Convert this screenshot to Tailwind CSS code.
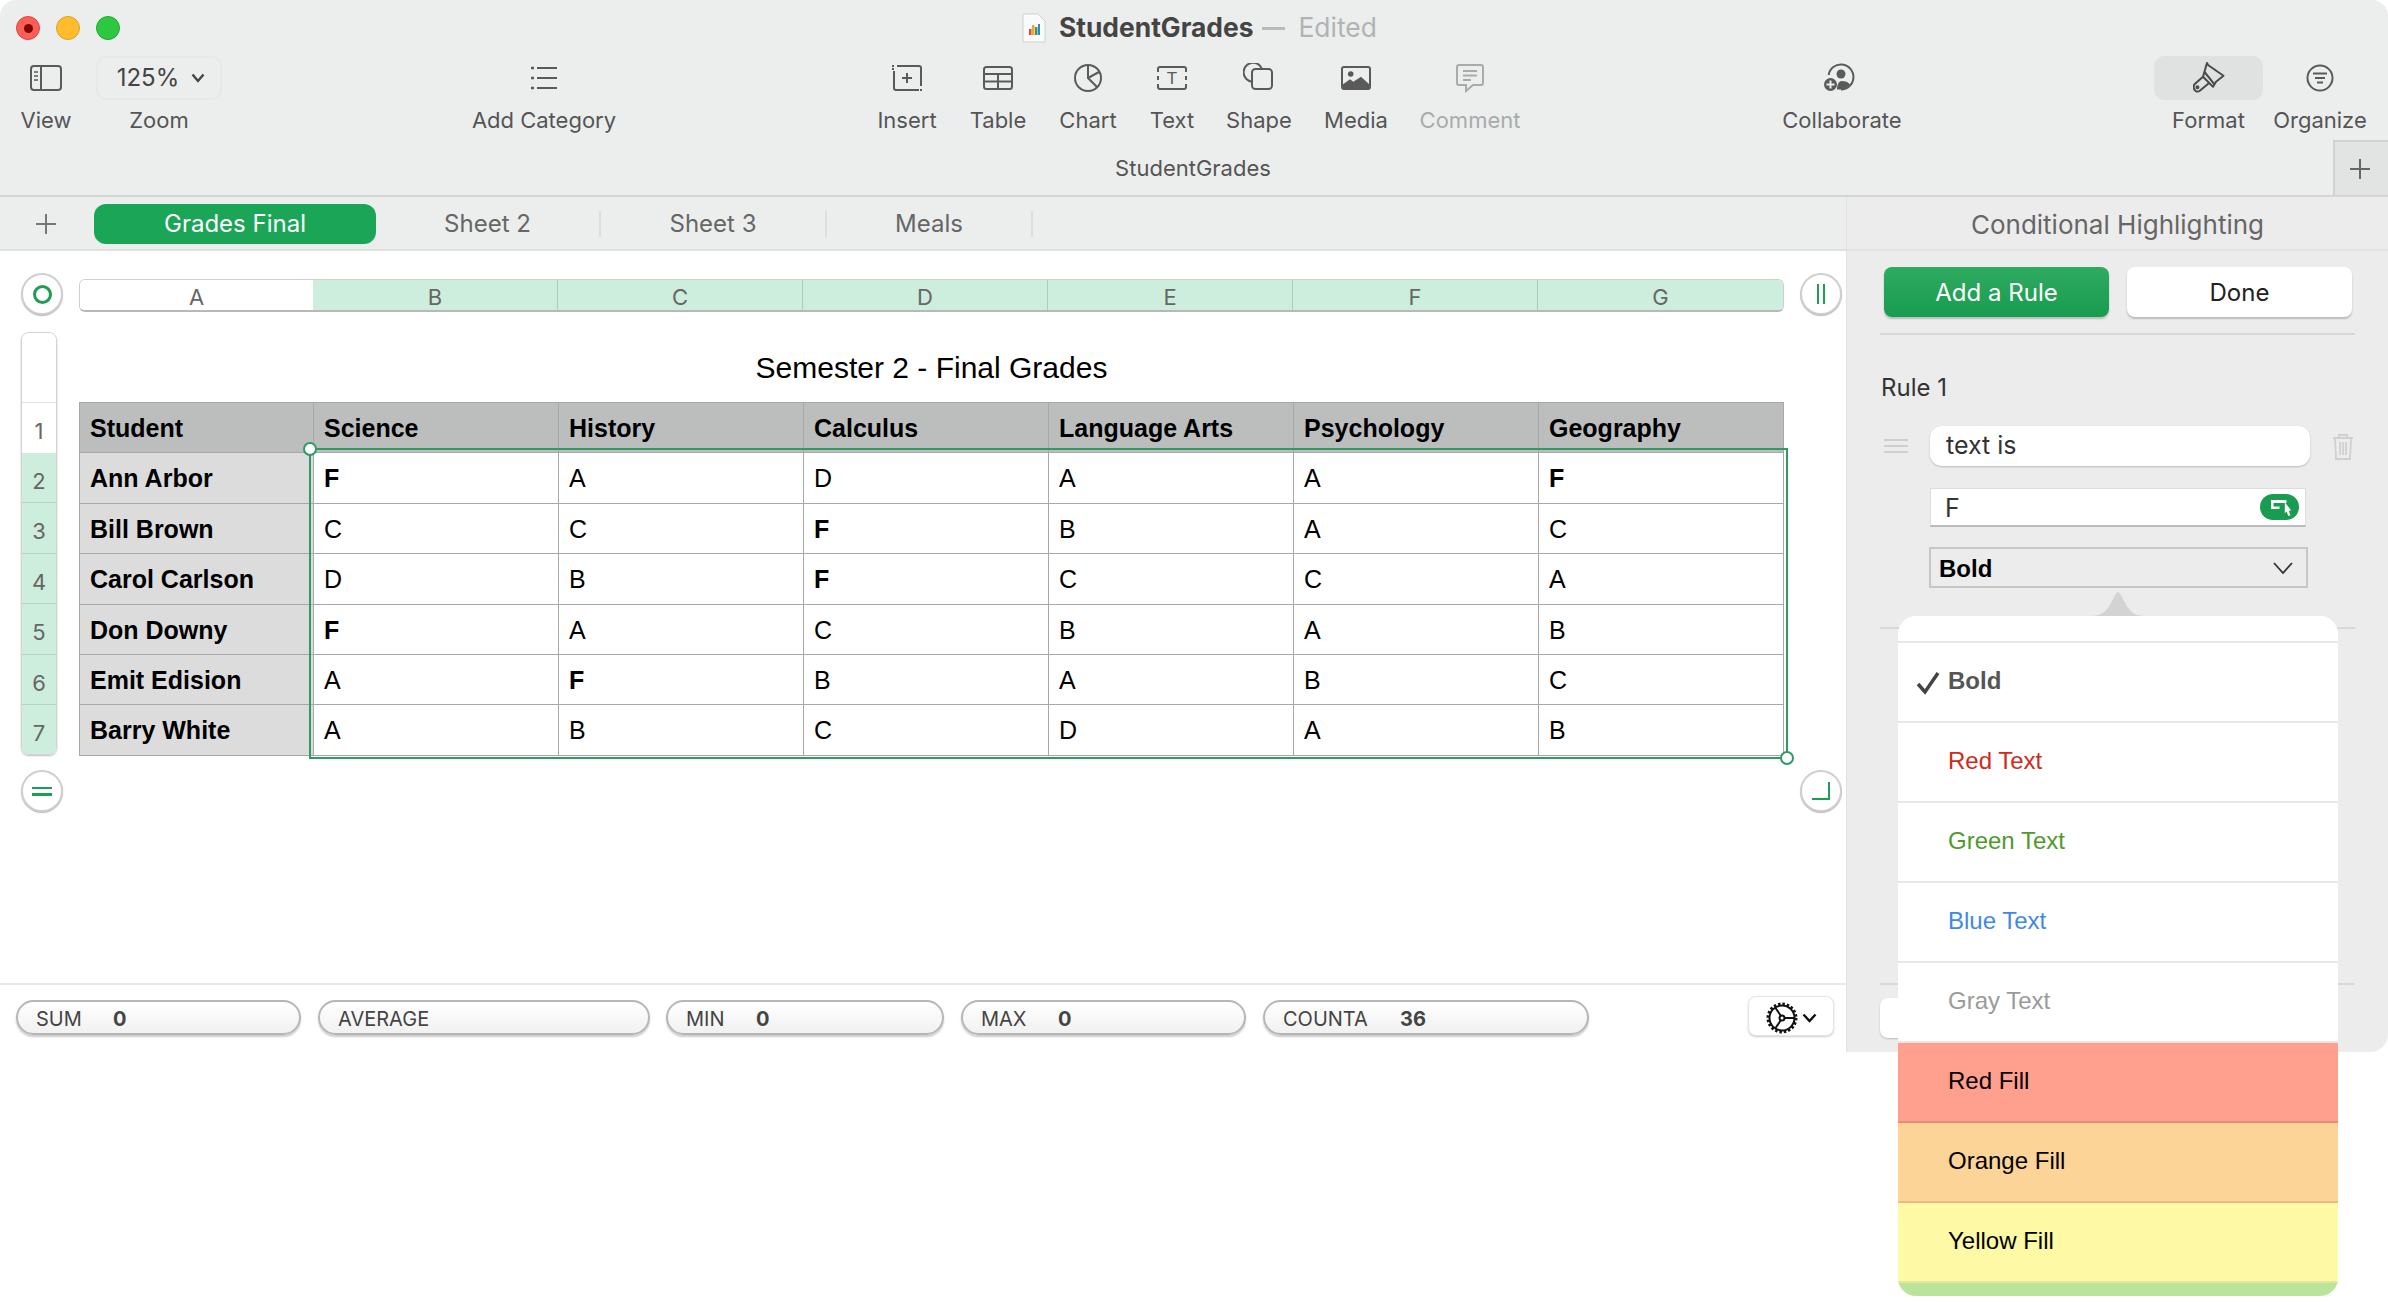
<!DOCTYPE html>
<html lang="en">
<head>
    <meta charset="UTF-8">
    <title>StudentGrades - Numbers</title>
    <script src="https://cdn.jsdelivr.net/npm/@tailwindcss/browser@4"></script>
</head>
<body class="bg-white">
<div class="w-[2388px] h-[1302px] overflow-hidden relative [font-family:Inter,sans-serif] text-[#555] antialiased">

    <!-- title bar and toolbar -->
    <header class="h-[197px] bg-[#eceeee] rounded-t-[16px] border-b-2 border-[#d4d6d6]">
        <div class="h-[56px] flex items-center">
            <span class="ml-[16px] w-[24px] h-[24px] rounded-full bg-[#fd5f57] border border-[#e0443e] flex items-center justify-center"><span class="w-[9px] h-[9px] rounded-full bg-[#7e0508]"></span></span>
            <span class="ml-[16px] w-[24px] h-[24px] rounded-full bg-[#febc2e] border border-[#dea123]"></span>
            <span class="ml-[16px] w-[24px] h-[24px] rounded-full bg-[#2dc840] border border-[#1aab29]"></span>
            <svg class="ml-[902px]" width="24" height="30" viewBox="0 0 24 30">
                <path d="M1 1h15l7 7v21H1z" fill="#fbfbfb" stroke="#cfcfcf"/>
                <rect x="7" y="16" width="2.5" height="6" fill="#e04b3a"/><rect x="10" y="12" width="2.5" height="10" fill="#f0a330"/><rect x="13" y="14" width="2.5" height="8" fill="#2aa552"/><rect x="16" y="11" width="2" height="11" fill="#3c7fd8"/>
            </svg>
            <span class="ml-[13px] text-[26.4px] font-bold text-[#444]">StudentGrades</span>
            <span class="ml-[9px] w-[23px] h-[3px] bg-[#b8bbbb]"></span>
            <span class="ml-[13px] text-[26.4px] text-[#b0b3b3]">Edited</span>
        </div>

        <div class="h-[84px] flex text-[22px] leading-[28px] text-center">
            <div class="w-[92px] flex flex-col items-center">
                <div class="h-[44px] flex items-center justify-center">
                    <svg width="34" height="28" viewBox="0 0 34 28" fill="none" stroke="#5a5a5a" stroke-width="2"><rect x="2" y="2" width="30" height="24" rx="3"/><path d="M12 2v24"/><path d="M5 8h4M5 12h4M5 16h4" stroke-width="1.5"/></svg>
                </div>
                <span class="mt-[6px]">View</span>
            </div>
            <div class="ml-[4px] w-[126px] flex flex-col items-center">
                <div class="h-[44px] w-[126px] pl-[4px] rounded-[10px] border-2 border-[#e6e8e8] flex items-center justify-center gap-[12px] text-[#444]">
                    <span class="text-[24px]">125%</span>
                    <svg width="14" height="10" viewBox="0 0 14 10" fill="none" stroke="#444" stroke-width="2.4"><path d="M1.5 1.5 7 8l5.500-6.500"/></svg>
                </div>
                <span class="mt-[6px]">Zoom</span>
            </div>
            <div class="ml-[242px] w-[160px] flex flex-col items-center">
                <div class="h-[44px] flex items-center justify-center">
                    <svg width="28" height="30" viewBox="0 0 28 30" fill="none" stroke="#5a5a5a" stroke-width="2.200"><path d="M7 5h20M7 15h20M7 25h20"/><path d="M1 5h3M1 15h3M1 25h3" stroke-width="2.600"/></svg>
                </div>
                <span class="mt-[6px]">Add Category</span>
            </div>
            <div class="ml-[243px] w-[80px] flex flex-col items-center">
                <div class="h-[44px] flex items-center justify-center">
                    <svg width="32" height="28" viewBox="0 0 32 28" fill="none" stroke="#5a5a5a" stroke-width="2"><path d="M6 2h22a2 2 0 0 1 2 2v18M28 26H5a2 2 0 0 1-2-2V7"/><path d="M1 2h2M1 5h2M30 25v2" /><path d="M16 9v10M11 14h10"/></svg>
                </div>
                <span class="mt-[6px]">Insert</span>
            </div>
            <div class="ml-[11px] w-[80px] flex flex-col items-center">
                <div class="h-[44px] flex items-center justify-center">
                    <svg width="32" height="26" viewBox="0 0 32 26" fill="none" stroke="#5a5a5a" stroke-width="2"><rect x="2" y="2" width="28" height="22" rx="2.500"/><path d="M2 9h28M2 16.500h28M16 9v15"/></svg>
                </div>
                <span class="mt-[6px]">Table</span>
            </div>
            <div class="ml-[10px] w-[80px] flex flex-col items-center">
                <div class="h-[44px] flex items-center justify-center">
                    <svg width="30" height="30" viewBox="0 0 30 30" fill="none" stroke="#5a5a5a" stroke-width="2"><circle cx="15" cy="15" r="13"/><path d="M15 2v13l9 9M15 15l11-6"/></svg>
                </div>
                <span class="mt-[6px]">Chart</span>
            </div>
            <div class="ml-[4px] w-[80px] flex flex-col items-center">
                <div class="h-[44px] flex items-center justify-center">
                    <svg width="32" height="26" viewBox="0 0 32 26" fill="none" stroke="#5a5a5a" stroke-width="2"><path d="M2 7V4a2 2 0 0 1 2-2h24a2 2 0 0 1 2 2v3M2 19v3a2 2 0 0 0 2 2h24a2 2 0 0 0 2-2v-3M2 11v4M30 11v4"/><text x="16" y="19" text-anchor="middle" font-size="17" fill="#5a5a5a" stroke="none" font-family="Liberation Sans">T</text></svg>
                </div>
                <span class="mt-[6px]">Text</span>
            </div>
            <div class="ml-[7px] w-[80px] flex flex-col items-center">
                <div class="h-[44px] flex items-center justify-center">
                    <svg width="32" height="30" viewBox="0 0 32 30" fill="none" stroke="#5a5a5a" stroke-width="2"><path d="M9 18.700A9.500 9.500 0 1 1 19 6"/><rect x="9" y="6" width="20" height="20" rx="3.500"/></svg>
                </div>
                <span class="mt-[6px]">Shape</span>
            </div>
            <div class="ml-[17px] w-[80px] flex flex-col items-center">
                <div class="h-[44px] flex items-center justify-center">
                    <svg width="32" height="26" viewBox="0 0 32 26"><rect x="2" y="2" width="28" height="22" rx="2" fill="#eceeee" stroke="#5a5a5a" stroke-width="2"/><circle cx="10.700" cy="9" r="2.800" fill="#5a5a5a"/><path d="M2 20l8-5.700 3.300 2.400 7.700-5L30 20v4H2z" fill="#5a5a5a"/></svg>
                </div>
                <span class="mt-[6px]">Media</span>
            </div>
            <div class="ml-[24px] w-[100px] flex flex-col items-center text-[#a8abab]">
                <div class="h-[44px] flex items-center justify-center">
                    <svg width="30" height="30" viewBox="0 0 30 30" fill="none" stroke="#a8abab" stroke-width="2"><path d="M4 2h22a2 2 0 0 1 2 2v16a2 2 0 0 1-2 2h-8l-7 6v-6H4a2 2 0 0 1-2-2V4a2 2 0 0 1 2-2z"/><path d="M8 8h14M8 12.500h14M8 17h8"/></svg>
                </div>
                <span class="mt-[6px]">Comment</span>
            </div>
            <div class="ml-[252px] w-[140px] flex flex-col items-center">
                <div class="h-[44px] flex items-center justify-center">
                    <svg width="36" height="30" viewBox="0 0 36 30" fill="none" stroke="#5a5a5a" stroke-width="2"><path d="M4.600 12A12.500 12.500 0 1 1 17 26.500"/><circle cx="17" cy="11" r="4.500" fill="#5a5a5a" stroke="none"/><path d="M13 26.500c0-5 2-8.500 4.500-8.500 4 0 7 1 8.500 3.500-2 3-6 5-9.500 5z" fill="#5a5a5a" stroke="none"/><circle cx="6.500" cy="21.500" r="6.500" fill="#5a5a5a" stroke="none"/><path d="M6.500 17.500v8M2.500 21.500h8" stroke="#eceeee"/></svg>
                </div>
                <span class="mt-[6px]">Collaborate</span>
            </div>
            <div class="ml-[242px] w-[109px] flex flex-col items-center">
                <div class="h-[44px] w-[109px] rounded-[10px] bg-[#e0e2e2] flex items-center justify-center">
                    <svg width="32" height="32" viewBox="0 0 32 32" fill="none" stroke="#4a4a4a" stroke-width="2" stroke-linejoin="round"><path d="M14 1l1 2 15.500 10.700L23 19.700l-3 5-10-10z"/><path d="M11.500 10l10 12.300"/><path d="M10 14.700 1.500 22.300c-1.500 2-1 5 1 6.500 1.500 1 3 1 4.300-.1l9-7.400"/><circle cx="4.400" cy="25.300" r="1"/></svg>
                </div>
                <span class="mt-[6px]">Format</span>
            </div>
            <div class="ml-[7px] w-[100px] flex flex-col items-center">
                <div class="h-[44px] flex items-center justify-center">
                    <svg width="28" height="28" viewBox="0 0 28 28" fill="none" stroke="#5a5a5a" stroke-width="2"><circle cx="14" cy="14" r="12.500"/><path d="M7 9.500h14M9 14h10M11 18.500h6"/></svg>
                </div>
                <span class="mt-[6px]">Organize</span>
            </div>
        </div>

        <div class="h-[55px] flex items-center text-[22px]">
            <span class="ml-[1093px] w-[200px] text-center pt-[1px]">StudentGrades</span>
            <span class="ml-auto w-[55px] h-[55px] pr-[3px] bg-[#e2e3e3] border-l-2 border-t-2 border-[#d0d2d2] flex items-center justify-center">
                <svg width="22" height="22" viewBox="0 0 22 22" stroke="#666" stroke-width="2"><path d="M11 1v20M1 11h20"/></svg>
            </span>
        </div>
    </header>

    <div class="flex h-[855px]">
        <!-- sheet area -->
        <div class="w-[1846px] flex flex-col">
            <div class="h-[54px] pt-[2px] bg-[#eceeee] border-b-2 border-[#dfe1e1] flex items-center text-[24px] text-[#666]">
                <svg class="ml-[36px]" width="20" height="20" viewBox="0 0 20 20" stroke="#777" stroke-width="2"><path d="M10 0v20M0 10h20"/></svg>
                <div class="ml-[38px] w-[282px] h-[40px] rounded-[12px] bg-[#1ba557] text-white flex items-center justify-center">Grades Final</div>
                <div class="w-[225px] text-center border-r-2 border-[#dcdede] h-[26px] leading-[26px]">Sheet 2</div>
                <div class="w-[226px] text-center border-r-2 border-[#dcdede] h-[26px] leading-[26px]">Sheet 3</div>
                <div class="w-[206px] text-center border-r-2 border-[#dcdede] h-[26px] leading-[26px]">Meals</div>
            </div>

            <div class="flex-1 bg-white">
                <div class="flex mt-[22px] h-[42px]">
                    <div class="ml-[21px] w-[42px] h-[42px] rounded-full border-2 border-[#cfcfcf] shadow-[0_1px_1px_#bbb] bg-white flex items-center justify-center">
                        <span class="w-[19px] h-[19px] rounded-full border-[3px] border-[#1f9d55]"></span>
                    </div>
                    <div class="ml-[16px] mt-[6px] h-[33px] w-[1705px] flex text-[22px] text-[#666] text-center leading-[34px] border border-[#cfcfcf] border-b-2 border-b-[#b8b8b8] rounded-[6px] overflow-hidden">
                        <div class="w-[233px] bg-white">A</div>
                        <div class="w-[245px] bg-[#cdeddd] border-r border-[#a9cfbb]">B</div>
                        <div class="w-[245px] bg-[#cdeddd] border-r border-[#a9cfbb]">C</div>
                        <div class="w-[245px] bg-[#cdeddd] border-r border-[#a9cfbb]">D</div>
                        <div class="w-[245px] bg-[#cdeddd] border-r border-[#a9cfbb]">E</div>
                        <div class="w-[245px] bg-[#cdeddd] border-r border-[#a9cfbb]">F</div>
                        <div class="flex-1 bg-[#cdeddd]">G</div>
                    </div>
                    <div class="ml-[16px] w-[42px] h-[42px] rounded-full border-2 border-[#cfcfcf] shadow-[0_1px_1px_#bbb] bg-white flex items-center justify-center gap-[4px]">
                        <span class="w-[2px] h-[20px] bg-[#1f9d55]"></span><span class="w-[2px] h-[20px] bg-[#1f9d55]"></span>
                    </div>
                </div>

                <div class="flex mt-[17px] h-[423px]">
                    <div class="ml-[21px] w-[36px] flex flex-col text-[22px] text-center text-[#666] leading-[56px] border border-[#d4d4d4] rounded-[8px] overflow-hidden shadow-[0_1px_2px_#bbb] [&>div]:shrink-0">
                        <div class="h-[70px] bg-white border-b border-[#e0e0e0]"></div>
                        <div class="h-[50px] bg-white">1</div>
                        <div class="h-[50.4px] bg-[#cdeddd] border-b border-[#b3d6c4]">2</div>
                        <div class="h-[50.4px] bg-[#cdeddd] border-b border-[#b3d6c4]">3</div>
                        <div class="h-[50.4px] bg-[#cdeddd] border-b border-[#b3d6c4]">4</div>
                        <div class="h-[50.4px] bg-[#cdeddd] border-b border-[#b3d6c4]">5</div>
                        <div class="h-[50.4px] bg-[#cdeddd] border-b border-[#b3d6c4]">6</div>
                        <div class="h-[50px] bg-[#cdeddd]">7</div>
                    </div>

                    <div class="ml-[22px] w-[1705px] [font-family:'Liberation_Sans',sans-serif] text-black">
                        <div class="h-[70px] flex items-center justify-center text-[30px]">Semester 2 - Final Grades</div>
                        <div class="relative">
                            <table class="w-[1705px] table-fixed border-collapse text-[25px] [&_td]:border [&_td]:border-[#a8a8a8] [&_td]:px-[10px] [&_td]:pt-[2px] [&_td]:pb-0 [&_td:first-child]:font-bold [&_td:first-child]:bg-[#dcdcdc] [&_td:first-child]:w-[234px] [&_tr]:h-[50.4px]">
                                <tr class="bg-[#bcbebd] font-bold">
                                    <td class="bg-[#bcbebd]!">Student</td><td>Science</td><td>History</td><td>Calculus</td><td>Language Arts</td><td>Psychology</td><td>Geography</td>
                                </tr>
                                <tr><td>Ann Arbor</td><td class="font-bold">F</td><td>A</td><td>D</td><td>A</td><td>A</td><td class="font-bold">F</td></tr>
                                <tr><td>Bill Brown</td><td>C</td><td>C</td><td class="font-bold">F</td><td>B</td><td>A</td><td>C</td></tr>
                                <tr><td>Carol Carlson</td><td>D</td><td>B</td><td class="font-bold">F</td><td>C</td><td>C</td><td>A</td></tr>
                                <tr><td>Don Downy</td><td class="font-bold">F</td><td>A</td><td>C</td><td>B</td><td>A</td><td>B</td></tr>
                                <tr><td>Emit Edision</td><td>A</td><td class="font-bold">F</td><td>B</td><td>A</td><td>B</td><td>C</td></tr>
                                <tr><td>Barry White</td><td>A</td><td>B</td><td>C</td><td>D</td><td>A</td><td>B</td></tr>
                            </table>
                            <!-- selection frame over the table -->
                            <div class="absolute left-[230px] top-[46px] w-[1479px] h-[311px] border-2 border-[#2e9b63]">
                                <span class="absolute -left-[8px] -top-[8px] w-[14px] h-[14px] rounded-full bg-white border-2 border-[#2e9b63]"></span>
                                <span class="absolute -right-[8px] -bottom-[8px] w-[14px] h-[14px] rounded-full bg-white border-2 border-[#2e9b63]"></span>
                            </div>
                        </div>
                    </div>
                </div>

                <div class="flex mt-[15px]">
                    <div class="ml-[21px] w-[42px] h-[42px] rounded-full border-2 border-[#cfcfcf] shadow-[0_1px_1px_#bbb] bg-white flex flex-col items-center justify-center gap-[4px]">
                        <span class="w-[20px] h-[2.500px] bg-[#1f9d55]"></span><span class="w-[20px] h-[2.500px] bg-[#1f9d55]"></span>
                    </div>
                    <div class="ml-[1737px] w-[42px] h-[42px] rounded-full border-2 border-[#cfcfcf] shadow-[0_1px_1px_#bbb] bg-white flex items-center justify-center">
                        <svg width="18" height="18" viewBox="0 0 18 18" fill="none" stroke="#1f9d55" stroke-width="2"><path d="M17 0v17H0"/></svg>
                    </div>
                </div>
            </div>

            <!-- formula bar -->
            <div class="h-[69px] bg-white border-t-2 border-[#e8e8e8] flex items-start text-[20px] text-[#444] pt-[15px]">
                <div class="ml-[16px] w-[285px] h-[35px] pt-[2px] rounded-full border-2 border-[#b6b6b6] bg-gradient-to-b from-white to-[#f1f1f1] shadow-[0_2px_2px_#ccc] flex items-center pl-[18px]"><span class="w-[77px]">SUM</span><b>0</b></div>
                <div class="ml-[17px] w-[332px] h-[35px] pt-[2px] rounded-full border-2 border-[#b6b6b6] bg-gradient-to-b from-white to-[#f1f1f1] shadow-[0_2px_2px_#ccc] flex items-center pl-[18px]">AVERAGE</div>
                <div class="ml-[16px] w-[278px] h-[35px] pt-[2px] rounded-full border-2 border-[#b6b6b6] bg-gradient-to-b from-white to-[#f1f1f1] shadow-[0_2px_2px_#ccc] flex items-center pl-[18px]"><span class="w-[70px]">MIN</span><b>0</b></div>
                <div class="ml-[17px] w-[285px] h-[35px] pt-[2px] rounded-full border-2 border-[#b6b6b6] bg-gradient-to-b from-white to-[#f1f1f1] shadow-[0_2px_2px_#ccc] flex items-center pl-[18px]"><span class="w-[77px]">MAX</span><b>0</b></div>
                <div class="ml-[17px] w-[326px] h-[35px] pt-[2px] rounded-full border-2 border-[#b6b6b6] bg-gradient-to-b from-white to-[#f1f1f1] shadow-[0_2px_2px_#ccc] flex items-center pl-[18px]"><span class="w-[117px]">COUNTA</span><b>36</b></div>
                <div class="ml-[159px] -mt-[4px] pt-[3px] w-[86px] h-[40px] rounded-[8px] bg-white border border-[#e6e6e6] shadow-[0_1px_2px_#ccc] flex items-center justify-center gap-[4px]">
                    <svg width="32" height="32" viewBox="0 0 32 32" fill="none" stroke="#111" stroke-width="2"><circle cx="16" cy="16" r="12.500"/><circle cx="16" cy="16" r="14" stroke-width="3" stroke-dasharray="2.400 2"/><circle cx="16" cy="16" r="2.500"/><path d="M18.500 16H28M14.800 18.200 9.500 26M14.800 13.800 9.500 6"/></svg>
                    <svg width="15" height="10" viewBox="0 0 15 10" fill="none" stroke="#111" stroke-width="2.400"><path d="M1.500 1.500 7.500 8l6-6.500"/></svg>
                </div>
            </div>
        </div>

        <!-- conditional highlighting sidebar -->
        <aside class="w-[542px] bg-[#ececec] rounded-br-[18px] border-l border-[#e2e2e2] relative">
            <div class="h-[54px] pt-[3px] border-b-2 border-[#e2e2e2] flex items-center justify-center text-[26px] text-[#666]">Conditional Highlighting</div>
            <div class="flex gap-[18px] pl-[37px] pt-[16px] text-[24px]">
                <div class="w-[225px] h-[50px] pt-[1px] rounded-[8px] bg-gradient-to-b from-[#2eab60] to-[#179c50] text-white shadow-[0_2px_2px_#bbb] flex items-center justify-center">Add a Rule</div>
                <div class="w-[225px] h-[50px] pt-[1px] rounded-[8px] bg-white text-[#222] shadow-[0_2px_2px_#bbb] flex items-center justify-center">Done</div>
            </div>
            <div class="ml-[33px] w-[475px] h-[2px] mt-[16px] bg-[#d8d8d8]"></div>
            <div class="ml-[34px] mt-[39px] h-[28px] leading-[28px] text-[24px] text-[#333]">Rule 1</div>
            <div class="flex items-center mt-[24px] h-[40px]">
                <div class="ml-[37px] w-[24px] flex flex-col gap-[4px]">
                    <span class="h-[2px] bg-[#cfcfcf]"></span><span class="h-[2px] bg-[#cfcfcf]"></span><span class="h-[2px] bg-[#cfcfcf]"></span>
                </div>
                <div class="ml-[22px] w-[380px] h-[40px] rounded-[12px] bg-white shadow-[0_1px_2px_#bbb] flex items-center pl-[16px] text-[25px] text-[#333]">text is</div>
                <svg class="ml-[22px]" width="22" height="27" viewBox="0 0 22 27" fill="none" stroke="#d0d0d0" stroke-width="1.800"><path d="M1 5h20M7 5V2h8v3M3 5l1 21h14l1-21M8 9v13M11 9v13M14 9v13"/></svg>
            </div>
            <div class="ml-[83px] mt-[22px] w-[376px] h-[39px] bg-white border border-[#dcdcdc] border-b-2 border-b-[#bbb] flex items-center pl-[14px] text-[25px] text-[#333]">
                <span class="pt-[4px]">F</span>
                <span class="ml-auto mr-[6px] w-[39px] h-[26px] rounded-full bg-[#179c50] flex items-center justify-center">
                    <svg width="24" height="20" viewBox="0 0 24 20"><path d="M3 3h15.500v3h-13v3.500h6V12H3z" fill="#fff"/><path d="M16.800 5.200l6.400 8.300-2.400.3 1.700 4.700-2.300.3-1.700-4.300-1.700 1.700z" fill="#fff"/></svg>
                </span>
            </div>
            <div class="ml-[82px] mt-[20px] w-[379px] h-[41px] pt-[2px] border-2 border-[#c6c6c6] flex items-center pl-[8px] text-[24px] font-bold text-black [font-family:'Liberation_Sans',sans-serif]">
                Bold
                <svg class="ml-auto mr-[13px] -mt-[2px]" width="20" height="12" viewBox="0 0 20 12" fill="none" stroke="#333" stroke-width="1.800"><path d="M1 1l9 10 9-10"/></svg>
            </div>
            <div class="ml-[33px] mt-[39px] w-[475px] h-[2px] bg-[#d8d8d8]"></div>
            <div class="ml-[33px] mt-[354px] w-[475px] h-[2px] bg-[#d8d8d8]"></div>
            <div class="ml-[33px] mt-[13px] w-[100px] h-[40px] rounded-[8px] bg-white shadow-[0_1px_2px_#bbb]"></div>

            <!-- open popup menu -->
            <div class="absolute left-[51px] top-[419px] w-[440px] [font-family:'Liberation_Sans',sans-serif] text-[24px]">
                <svg class="absolute left-[193px] -top-[24px]" width="54" height="24" viewBox="0 0 54 24"><path d="M0 24c10 0 15-4 20-13 3-6 5-11 7-11s4 5 7 11c5 9 10 13 20 13z" fill="#d3d3d3"/></svg>
                <div class="rounded-[18px] overflow-hidden bg-white">
                    <div class="h-[27px] border-b-2 border-[#e8e8e8]"></div>
                    <div class="h-[80px] pb-[2px] border-b-2 border-[#e8e8e8] flex items-center pl-[50px] relative font-bold text-[#555] leading-none">
                        <svg class="absolute left-[18px] top-[28px]" width="24" height="24" viewBox="0 0 24 24" fill="none" stroke="#444" stroke-width="3.500"><path d="M2 13l7 8L22 2"/></svg>
                        Bold
                    </div>
                    <div class="h-[80px] pb-[2px] border-b-2 border-[#e8e8e8] flex items-center pl-[50px] text-[#d12a1c]">Red Text</div>
                    <div class="h-[80px] pb-[2px] border-b-2 border-[#e8e8e8] flex items-center pl-[50px] text-[#4e9a2b]">Green Text</div>
                    <div class="h-[80px] pb-[2px] border-b-2 border-[#e8e8e8] flex items-center pl-[50px] text-[#3f88e8]">Blue Text</div>
                    <div class="h-[80px] pb-[2px] border-b-2 border-[#e8e8e8] flex items-center pl-[50px] text-[#9a9a9a]">Gray Text</div>
                    <div class="h-[80px] pb-[2px] bg-[#ff9f8e] border-b-2 border-[#e88c7c] flex items-center pl-[50px] text-black">Red Fill</div>
                    <div class="h-[80px] pb-[2px] bg-[#fdd498] border-b-2 border-[#e8bd85] flex items-center pl-[50px] text-black">Orange Fill</div>
                    <div class="h-[80px] pb-[2px] bg-[#fdf9a5] border-b-2 border-[#e8e59a] flex items-center pl-[50px] text-black">Yellow Fill</div>
                    <div class="h-[13px] bg-[#b9e59a]"></div>
                </div>
            </div>
        </aside>
    </div>
</div>
</body>
</html>
